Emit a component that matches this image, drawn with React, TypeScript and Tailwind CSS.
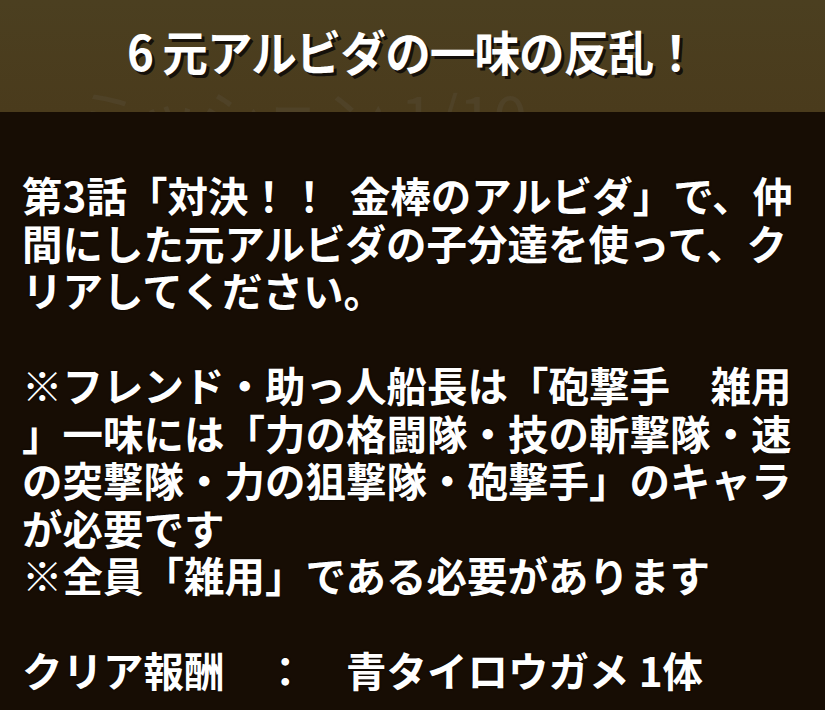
import React from 'react';

const lines: string[] = [
  '第3話「対決！！\u2002金棒のアルビダ」で、仲',
  '間にした元アルビダの子分達を使って、ク',
  'リアしてください。',
  '',
  '※フレンド・助っ人船長は「砲撃手　雑用',
  '」一味には「力の格闘隊・技の斬撃隊・速',
  'の突撃隊・力の狙撃隊・砲撃手」のキャラ',
  'が必要です',
  '※全員「雑用」である必要があります',
  '',
  'クリア報酬　：　青タイロウガメ 1体',
];

export default function App() {
  return (
    <div className="w-[825px] h-[710px] overflow-hidden bg-[#170d04] font-['Noto_Sans_CJK_JP',sans-serif]">
      <div className="relative h-[112px] overflow-hidden bg-gradient-to-b from-[#4b3f20] to-[#4a3b1c]">
        {/* faint mission label behind the title */}
        <div className="absolute left-[76px] top-[84px] text-[62px] leading-none font-normal text-[#4f4227] whitespace-nowrap">
          ミッション 1/10 <span className="text-[34px]">(0000体)</span>
        </div>
        <div className="relative flex h-full items-start justify-center pt-[18px]">
          <h1 className="text-[48px] leading-[64px] font-bold text-white whitespace-nowrap scale-x-[0.95] [text-shadow:3px_3px_0_#15100a] tracking-[-1px]">
            6&nbsp;元アルビダの一味の反乱！
          </h1>
        </div>
      </div>
      <div className="px-[22px] pt-[59px] flex flex-col">
        {lines.map((l, i) => (
          <div
            key={i}
            className="h-[47.5px] leading-[47.5px] text-[40.5px] font-bold text-white whitespace-nowrap [text-shadow:0_0_2px_#000]"
          >
            {l || '\u00a0'}
          </div>
        ))}
      </div>
    </div>
  );
}
